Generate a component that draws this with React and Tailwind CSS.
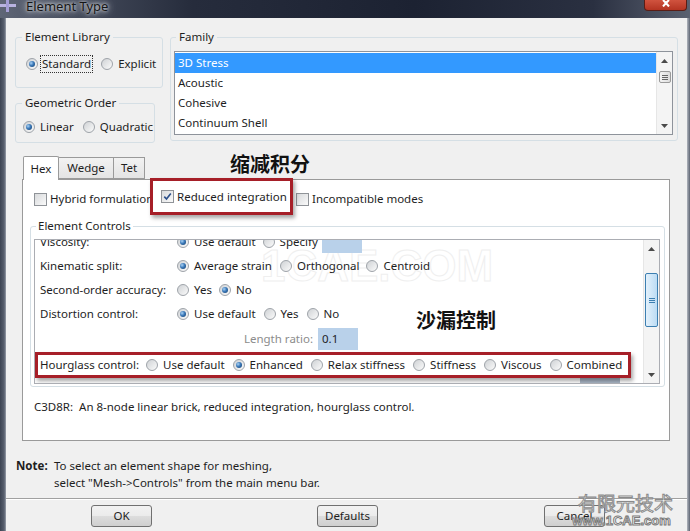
import React from "react";

function Radio({ checked }) {
  return (
    <span className="inline-flex w-[12px] h-[12px] shrink-0 items-center justify-center rounded-full border border-[#9ea3a9] bg-[linear-gradient(135deg,#cfd2d5,#fbfbfb)]">
      {checked && (
        <span className="block w-[6px] h-[6px] rounded-full bg-[radial-gradient(circle_at_35%_35%,#a9d2f5_0%,#3a78b8_45%,#123a66_100%)]" />
      )}
    </span>
  );
}

function Opt({ checked, children, className = "" }) {
  return (
    <span className={"flex items-center whitespace-nowrap " + className}>
      <Radio checked={checked} />
      <span className="ml-[5px]">{children}</span>
    </span>
  );
}

function Check({ checked }) {
  return (
    <span className="inline-flex w-[13px] h-[13px] shrink-0 items-center justify-center border border-[#8f9398] bg-[linear-gradient(135deg,#d8dadc,#fafafa)]">
      {checked && (
        <svg width="9" height="9" viewBox="0 0 9 9">
          <path d="M1.3 4.6 L3.5 7.1 L7.8 1.4" fill="none" stroke="#2b4f8a" strokeWidth="1.6" />
        </svg>
      )}
    </span>
  );
}

function UpArrow() {
  return (
    <svg width="7" height="4" viewBox="0 0 7 4">
      <path d="M0 4 L3.5 0 L7 4 Z" fill="#4a4a4a" />
    </svg>
  );
}
function DownArrow() {
  return (
    <svg width="7" height="4" viewBox="0 0 7 4">
      <path d="M0 0 L3.5 4 L7 0 Z" fill="#4a4a4a" />
    </svg>
  );
}

function Row({ label, children }) {
  return (
    <div className="flex items-center h-[24px] pl-[5px] shrink-0">
      <span className="w-[137px] shrink-0 whitespace-nowrap">{label}</span>
      {children}
    </div>
  );
}

function Button({ children, className = "" }) {
  return (
    <div
      className={
        "w-[61px] h-[22px] flex items-center justify-center rounded-[3px] border border-[#707070] bg-[linear-gradient(180deg,#f2f2f2_0%,#ebebeb_50%,#dddddd_51%,#cfcfcf_100%)] " +
        className
      }
    >
      {children}
    </div>
  );
}

export default function App() {
  return (
    <div className="w-[690px] h-[531px] overflow-hidden relative flex flex-col text-[11.5px] leading-[16px] text-[#1e1e1e] font-['Noto_Sans','Open_Sans',sans-serif]">
      {/* title bar */}
      <div className="h-[18px] shrink-0 flex items-start bg-[linear-gradient(90deg,#5f6676_0%,#464d5d_10%,#262c3c_28%,#1c2232_60%,#2a3041_86%,#5a6170_100%)]">
        <svg width="16" height="12" viewBox="0 0 16 12" className="shrink-0">
          <rect x="0" y="4" width="16" height="3" fill="#b9b3e0" />
          <rect x="6" y="0" width="3" height="12" fill="#a59ed6" />
        </svg>
        <span className="ml-[10px] text-[13px] leading-[13px] text-[#151515] [text-shadow:0_0_6px_#c8ccd2,0_0_10px_#b9bec6,0_0_3px_#dfe2e6]">
          Element Type
        </span>
        <div className="ml-auto mr-[3px] w-[43px] h-[11px] rounded-b-[4px] border border-t-0 border-[#5a1d15] bg-[linear-gradient(180deg,#d0533f,#b43422)] flex items-start justify-center">
          <svg width="10" height="7" viewBox="0 0 10 7">
            <path d="M2 0 L5 3 L8 0 M5 3 L2 6.5 M5 3 L8 6.5" stroke="#ffffff" strokeWidth="2" fill="none" />
          </svg>
        </div>
      </div>

      <div className="flex flex-1 min-h-0">
        <div className="w-[6px] shrink-0 bg-[linear-gradient(90deg,#3c4352,#59606f_70%,#9aa0ab)]" />
        <div className="w-[681px] shrink-0 bg-[#f0f0f0] flex flex-col">
          {/* top row */}
          <div className="flex mt-[11px] ml-[9px]">
            <div className="w-[148px] flex flex-col">
              <fieldset className="h-[59px] border border-[#d5dfe5] rounded-[3px]">
                <legend className="ml-[6px] px-[3px] leading-[16px]">Element Library</legend>
                <div className="flex items-center mt-[9px] ml-[10px] h-[20px]">
                  <Radio checked />
                  <span className="ml-[2px] px-[1px] border border-dotted border-[#333]">Standard</span>
                  <Opt className="ml-[8px]">Explicit</Opt>
                </div>
              </fieldset>
              <fieldset className="mt-[7px] w-[140px] h-[48px] border border-[#d5dfe5] rounded-[3px]">
                <legend className="ml-[6px] px-[3px] leading-[16px]">Geometric Order</legend>
                <div className="flex items-center mt-[6px] ml-[7px] h-[20px]">
                  <Opt checked>Linear</Opt>
                  <Opt className="ml-[9px]">Quadratic</Opt>
                </div>
              </fieldset>
            </div>
            <fieldset className="ml-[7px] w-[508px] h-[112px] border border-[#d5dfe5] rounded-[3px]">
              <legend className="ml-[5px] px-[3px] leading-[16px]">Family</legend>
              <div className="ml-[3px] mt-[6px] w-[499px] h-[84px] border border-[#8e939b] bg-white flex">
                <div className="flex-1 flex flex-col pt-[1px]">
                  <div className="h-[20px] bg-[#3399ff] text-white pl-[3px] flex items-center">3D Stress</div>
                  <div className="h-[20px] pl-[3px] flex items-center">Acoustic</div>
                  <div className="h-[20px] pl-[3px] flex items-center">Cohesive</div>
                  <div className="h-[20px] pl-[3px] flex items-center">Continuum Shell</div>
                </div>
                <div className="w-[16px] bg-[#f4f4f4] border-l border-[#e6e6e6] flex flex-col items-center">
                  <div className="h-[17px] flex items-center justify-center"><UpArrow /></div>
                  <div className="mt-[2px] w-[12px] h-[12px] border border-[#9a9a9a] rounded-[2px] bg-[linear-gradient(90deg,#f4f4f4,#dcdcdc)] flex flex-col items-center justify-center gap-[1px]">
                    <span className="w-[6px] h-[1px] bg-[#666]" />
                    <span className="w-[6px] h-[1px] bg-[#666]" />
                    <span className="w-[6px] h-[1px] bg-[#666]" />
                  </div>
                  <div className="flex-1" />
                  <div className="h-[17px] flex items-center justify-center"><DownArrow /></div>
                </div>
              </div>
            </fieldset>
          </div>

          {/* tabs */}
          <div className="mt-[13px] ml-[17px] h-[24px] mb-[-1px] flex items-end relative z-10">
            <div className="w-[36px] h-[24px] bg-white border border-b-0 border-[#9a9a9a] flex items-center justify-center rounded-t-[2px]">Hex</div>
            <div className="w-[55px] h-[22px] mb-[1px] bg-[linear-gradient(180deg,#f2f2f2,#e4e4e4)] border border-l-0 border-[#9a9a9a] flex items-center justify-center">Wedge</div>
            <div className="w-[31px] h-[22px] mb-[1px] bg-[linear-gradient(180deg,#f2f2f2,#e4e4e4)] border border-l-0 border-[#9a9a9a] flex items-center justify-center">Tet</div>
            <span className="self-start mt-[-2px] ml-[85px] text-[20px] leading-[20px] font-bold text-[#111] font-['Noto_Sans_CJK_SC',sans-serif]">缩减积分</span>
          </div>

          {/* tab panel */}
          <div className="ml-[16px] w-[648px] h-[262px] bg-white border border-[#9a9a9a] flex flex-col">
            <div className="mt-[7px] ml-[11px] h-[24px] flex items-center">
              <div className="w-[116px] flex items-center overflow-hidden whitespace-nowrap">
                <Check />
                <span className="ml-[3px]">Hybrid formulation</span>
              </div>
              <div className="self-start mt-[-9px] w-[143px] h-[37px] border-[3px] border-[#a61f28] bg-white shadow-[2px_3px_4px_rgba(0,0,0,0.35)] flex items-center pl-[8px] whitespace-nowrap relative z-10">
                <Check checked />
                <span className="ml-[3px]">Reduced integration</span>
              </div>
              <div className="ml-[3px] flex items-center whitespace-nowrap">
                <Check />
                <span className="ml-[3px]">Incompatible modes</span>
              </div>
            </div>

            <fieldset className="mt-[7px] ml-[7px] w-[635px] h-[169px] border border-[#d5dfe5] rounded-[3px]">
              <legend className="ml-[5px] px-[2px] leading-[16px] bg-white">Element Controls</legend>
              <div className="mt-[5px] ml-[3px] w-[626px] h-[145px] border border-[#abadb3] bg-white flex overflow-hidden relative">
                <span className="absolute left-[226px] top-[4px] text-[44px] leading-[44px] font-bold text-transparent [-webkit-text-stroke:1px_#efefef] font-['Liberation_Sans',sans-serif]">1CAE.COM</span>
                <div className="flex-1 flex flex-col min-w-0 relative">
                  <div className="mt-[-10px] flex items-center h-[24px] pl-[5px] shrink-0">
                    <span className="w-[137px] shrink-0">Viscosity:</span>
                    <Opt checked>Use default</Opt>
                    <Opt className="ml-[7px]">Specify</Opt>
                    <span className="ml-[4px] w-[40px] h-[22px] bg-[#b9d1ea]" />
                  </div>
                  <Row label="Kinematic split:">
                    <Opt checked>Average strain</Opt>
                    <Opt className="ml-[8px]">Orthogonal</Opt>
                    <Opt className="ml-[7px]">Centroid</Opt>
                  </Row>
                  <Row label="Second-order accuracy:">
                    <Opt>Yes</Opt>
                    <Opt checked className="ml-[7px]">No</Opt>
                  </Row>
                  <Row label="Distortion control:">
                    <Opt checked>Use default</Opt>
                    <Opt className="ml-[8px]">Yes</Opt>
                    <Opt className="ml-[8px]">No</Opt>
                  </Row>
                  <div className="flex items-center h-[26px] pl-[5px] shrink-0">
                    <span className="w-[273px] text-right text-[#8c8c8c]">Length ratio:</span>
                    <span className="ml-[5px] w-[40px] h-[22px] bg-[#b9d1ea] flex items-center pl-[4px]">0.1</span>
                  </div>
                  <div className="h-[26px] w-[596px] shrink-0 border-[3px] border-[#a61f28] shadow-[2px_3px_4px_rgba(0,0,0,0.35)] flex items-center pl-[2px] whitespace-nowrap relative z-10 bg-white">
                    <span>Hourglass control:</span>
                    <Opt className="ml-[7px]">Use default</Opt>
                    <Opt checked className="ml-[8px]">Enhanced</Opt>
                    <Opt className="ml-[8px]">Relax stiffness</Opt>
                    <Opt className="ml-[8px]">Stiffness</Opt>
                    <Opt className="ml-[8px]">Viscous</Opt>
                    <Opt className="ml-[8px]">Combined</Opt>
                  </div>
                  <div className="h-[6px] flex items-end">
                    <span className="ml-[545px] w-[40px] h-[5px] bg-[#a9b6c6]" />
                  </div>
                </div>
                <div className="w-[16px] shrink-0 bg-[#f4f4f4] border-l border-[#e6e6e6] flex flex-col items-center relative">
                  <div className="h-[17px] flex items-center justify-center"><UpArrow /></div>
                  <div className="mt-[16px] w-[13px] h-[54px] rounded-[2px] border border-[#3c7fb1] bg-[linear-gradient(90deg,#e3f1fc,#bcdcf4)] flex flex-col items-center justify-center gap-[1px]">
                    <span className="w-[6px] h-[1px] bg-[#3c7fb1]" />
                    <span className="w-[6px] h-[1px] bg-[#3c7fb1]" />
                    <span className="w-[6px] h-[1px] bg-[#3c7fb1]" />
                  </div>
                  <div className="flex-1" />
                  <div className="h-[17px] flex items-center justify-center"><DownArrow /></div>
                </div>
                <span className="absolute left-[381px] top-[70px] text-[20px] leading-[20px] font-bold text-[#111] font-['Noto_Sans_CJK_SC',sans-serif]">沙漏控制</span>
              </div>
            </fieldset>

            <div className="mt-[12px] ml-[11px] whitespace-nowrap">
              C3D8R:&nbsp; An 8-node linear brick, reduced integration, hourglass control.
            </div>
          </div>

          {/* note */}
          <div className="mt-[16px] ml-[10px] flex leading-[17px]">
            <span className="w-[38px] font-bold">Note:</span>
            <div className="flex flex-col">
              <span>To select an element shape for meshing,</span>
              <span>select "Mesh-&gt;Controls" from the main menu bar.</span>
            </div>
          </div>

          <div className="mt-[7px] h-[1px] bg-[#a0a0a0]" />
          <div className="h-[1px] bg-white" />

          <div className="mt-[5px] flex">
            <Button className="ml-[85px] w-[60px]">OK</Button>
            <Button className="ml-[165px]">Defaults</Button>
            <Button className="ml-[166px] w-[60px]">Cancel</Button>
          </div>
        </div>
        <div className="w-[3px] shrink-0 bg-[linear-gradient(90deg,#b0b5bd,#5d6472)]" />
      </div>

      {/* watermark */}
      <div className="absolute left-[578px] top-[492px] flex flex-col items-center pointer-events-none">
        <span className="text-[19px] leading-[22px] text-white font-['Noto_Sans_CJK_SC',sans-serif] [-webkit-text-stroke:1px_#8a8a8a]">有限元技术</span>
        <span className="ml-[-8px] text-[13px] leading-[14px] font-bold text-white font-['Liberation_Sans',sans-serif] [-webkit-text-stroke:1px_#7a7a7a]">www.1CAE.com</span>
      </div>
    </div>
  );
}
